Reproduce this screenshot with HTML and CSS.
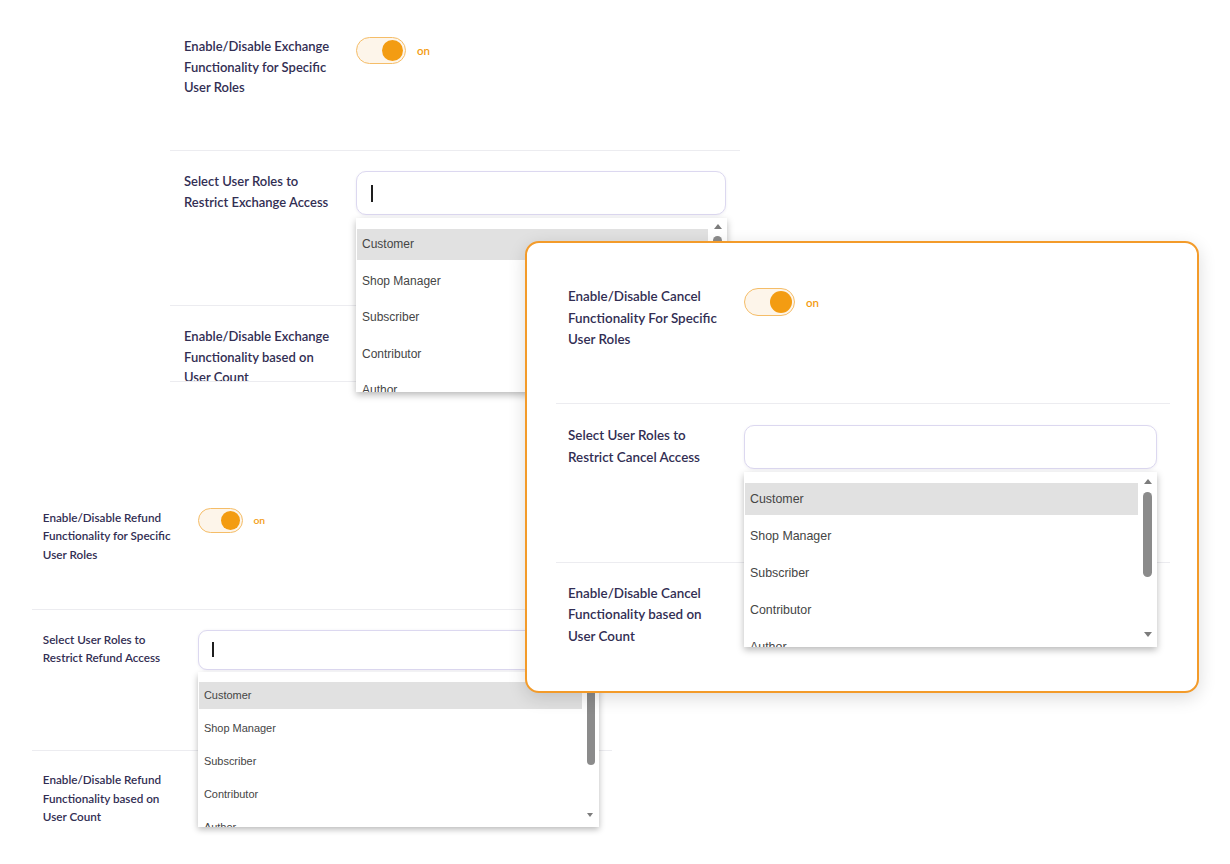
FILE: index.html
```html
<!DOCTYPE html>
<html lang="en">
<head>
<meta charset="utf-8">
<title>User role restrictions</title>
<link rel="stylesheet" href="styles.css">
</head>
<body>
<div class="canvas">

  <section class="panel panel-exchange">
    <div class="panel-body">
      <div class="row row-first">
        <div class="label">Enable/Disable Exchange Functionality for Specific User Roles</div>
        <div class="control">
          <span class="switch"><span class="knob"></span></span>
          <span class="state">on</span>
        </div>
      </div>
      <div class="row row-second">
        <div class="label">Select User Roles to Restrict Exchange Access</div>
        <div class="control">
          <div class="combo">
            <div class="input"><span class="caret"></span></div>
            <div class="dropdown">
              <ul class="options">
                <li class="active">Customer</li>
                <li>Shop Manager</li>
                <li>Subscriber</li>
                <li>Contributor</li>
                <li>Author</li>
              </ul>
              <div class="scrollbar"><span class="arrow up"></span><span class="thumb"></span><span class="arrow down"></span></div>
            </div>
          </div>
        </div>
      </div>
      <div class="row row-third">
        <div class="label">Enable/Disable Exchange Functionality based on User Count</div>
      </div>
    </div>
  </section>

  <section class="panel panel-refund">
    <div class="panel-body">
      <div class="row row-first">
        <div class="label">Enable/Disable Refund Functionality for Specific User Roles</div>
        <div class="control">
          <span class="switch"><span class="knob"></span></span>
          <span class="state">on</span>
        </div>
      </div>
      <div class="row row-second">
        <div class="label">Select User Roles to Restrict Refund Access</div>
        <div class="control">
          <div class="combo">
            <div class="input"><span class="caret"></span></div>
            <div class="dropdown">
              <ul class="options">
                <li class="active">Customer</li>
                <li>Shop Manager</li>
                <li>Subscriber</li>
                <li>Contributor</li>
                <li>Author</li>
              </ul>
              <div class="scrollbar"><span class="arrow up"></span><span class="thumb"></span><span class="arrow down"></span></div>
            </div>
          </div>
        </div>
      </div>
      <div class="row row-third">
        <div class="label">Enable/Disable Refund Functionality based on User Count</div>
      </div>
    </div>
  </section>

  <section class="panel panel-cancel">
    <div class="panel-body">
      <div class="row row-first">
        <div class="label">Enable/Disable Cancel Functionality For Specific User Roles</div>
        <div class="control">
          <span class="switch"><span class="knob"></span></span>
          <span class="state">on</span>
        </div>
      </div>
      <div class="row row-second">
        <div class="label">Select User Roles to Restrict Cancel Access</div>
        <div class="control">
          <div class="combo">
            <div class="input"></div>
            <div class="dropdown">
              <ul class="options">
                <li class="active">Customer</li>
                <li>Shop Manager</li>
                <li>Subscriber</li>
                <li>Contributor</li>
                <li>Author</li>
              </ul>
              <div class="scrollbar"><span class="arrow up"></span><span class="thumb"></span><span class="arrow down"></span></div>
            </div>
          </div>
        </div>
      </div>
      <div class="row row-third">
        <div class="label">Enable/Disable Cancel Functionality based on User Count</div>
      </div>
    </div>
  </section>

</div>
</body>
</html>
```

FILE: styles.css
```css
html, body {
  margin: 0;
  padding: 0;
  background: #ffffff;
}

.canvas {
  position: relative;
  width: 1230px;
  height: 864px;
  overflow: hidden;
  background: #ffffff;
}

/* ---------- panels placed on the canvas ---------- */
.panel {
  position: absolute;
  background: #ffffff;
  font-family: Lato, "Open Sans", "DejaVu Sans", sans-serif;
  color: #312d52;

  --label-pad: 14px;
  --label-col: 172px;
  --label-w: 155px;
  --fs: 13px;
  --lh: 20.5px;
  --row1-h: 151px;
  --row1-pad: 36px;
  --row2-h: 155px;
  --row2-pad: 20px;
  --row3-h: 76px;
  --row3-pad: 20px;
  --sw-w: 50px;
  --sw-h: 27px;
  --sw-mt: 1px;
  --knob: 21px;
  --in-w: 370px;
  --in-h: 44px;
  --dd-gap: 3px;
  --dd-w: 371px;
  --dd-h: 174px;
  --dd-pad: 11px;
  --item-h: 31px;
  --item-gap: 5.5px;
  --item-fs: 12px;
  --thumb-top: 18px;
  --thumb-h: 85px;
  --arrow-up: 6px;
  --arrow-down: 158px;
}

.panel-exchange {
  left: 170px;
  top: 0;
  width: 570px;
  z-index: 1;
}

.panel-refund {
  left: 32px;
  top: 474px;
  z-index: 2;
}

.panel-refund .panel-body {
  zoom: 0.9;
  width: 644px;
  --label-pad: 12px;
  --label-col: 173px;
  --row1-h: 151px;
  --row1-pad: 37.5px;
  --row2-h: 157px;
  --row2-pad: 22px;
  --row3-h: 120px;
  --row3-pad: 21px;
  --sw-h: 28px;
  --sw-mt: 0px;
  --in-w: 445px;
  --in-h: 44.5px;
  --dd-w: 445.5px;
  --dd-h: 172px;
  --item-h: 30px;
  --item-gap: 6.7px;
  --item-fs: 12.2px;
  --arrow-down: 156px;
}

.panel-refund .row-third {
  border-bottom: none;
}

.panel-cancel {
  left: 525px;
  top: 241px;
  width: 674px;
  height: 452px;
  box-sizing: border-box;
  border: 2.5px solid #f39b2a;
  border-radius: 14px;
  padding: 0 27px 0 29px;
  box-shadow: 0 5px 18px rgba(0, 0, 0, 0.14);
  z-index: 3;

  --label-pad: 12px;
  --label-col: 176px;
  --label-w: 160px;
  --fs: 13.4px;
  --lh: 21.5px;
  --row1-h: 161px;
  --row1-pad: 43px;
  --row2-h: 159px;
  --row2-pad: 21px;
  --row3-h: 120px;
  --row3-pad: 19.5px;
  --sw-w: 51px;
  --sw-h: 28px;
  --sw-mt: 2px;
  --knob: 22px;
  --in-w: 413px;
  --in-h: 44px;
  --dd-w: 413px;
  --dd-h: 175px;
  --item-h: 32px;
  --item-gap: 5px;
  --item-fs: 12.4px;
  --thumb-top: 20px;
  --thumb-h: 85px;
  --arrow-up: 7px;
  --arrow-down: 160px;
}

.panel-cancel .row-third {
  border-bottom: none;
}

/* ---------- rows ---------- */
.row {
  display: grid;
  grid-template-columns: var(--label-col) auto;
  align-items: start;
  box-sizing: border-box;
  padding-left: var(--label-pad);
  border-bottom: 1px solid #ececf0;
}

.row-first {
  height: var(--row1-h);
  padding-top: var(--row1-pad);
}

.row-second {
  height: var(--row2-h);
  padding-top: var(--row2-pad);
}

.row-third {
  height: var(--row3-h);
  padding-top: var(--row3-pad);
  overflow: hidden;
}

.label {
  max-width: var(--label-w);
  font-size: var(--fs);
  line-height: var(--lh);
  font-weight: 600;
  color: #322e53;
}

.control {
  display: flex;
  align-items: center;
  gap: 11px;
}

/* ---------- switch ---------- */
.switch {
  position: relative;
  display: flex;
  align-items: center;
  justify-content: flex-end;
  box-sizing: border-box;
  width: var(--sw-w);
  height: var(--sw-h);
  margin-top: var(--sw-mt);
  padding-right: 2.5px;
  border: 1.5px solid #f5bd68;
  border-radius: 16px;
  background: #fdf5ea;
}

.knob {
  width: var(--knob);
  height: var(--knob);
  border-radius: 50%;
  background: #f39c12;
}

.state {
  margin-top: var(--sw-mt);
  font-size: 11.5px;
  font-weight: 600;
  color: #f39c12;
}

/* ---------- combo box ---------- */
.combo {
  position: relative;
  width: var(--in-w);
}

.input {
  display: flex;
  align-items: center;
  box-sizing: border-box;
  width: var(--in-w);
  height: var(--in-h);
  padding-left: 14px;
  border: 1.5px solid #dcd8f0;
  border-radius: 10px;
  background: #ffffff;
  box-shadow: 0 1px 3px rgba(60, 50, 120, 0.08);
}

.caret {
  width: 1.6px;
  height: 17px;
  background: #1e1e1e;
}

/* the opened list lies over the following rows */
.dropdown {
  position: absolute;
  left: 0;
  top: calc(var(--in-h) + var(--dd-gap));
  width: var(--dd-w);
  height: var(--dd-h);
  overflow: hidden;
  background: #ffffff;
  box-shadow: 0 3px 7px rgba(0, 0, 0, 0.28);
  font-family: "Liberation Sans", Arial, sans-serif;
  z-index: 5;
}

.options {
  list-style: none;
  margin: 0 19px 0 1px;
  padding: var(--dd-pad) 0 0;
}

.options li {
  height: var(--item-h);
  line-height: var(--item-h);
  margin-bottom: var(--item-gap);
  padding-left: 5px;
  font-size: var(--item-fs);
  color: #454545;
  white-space: nowrap;
}

.options li.active {
  background: #e1e1e1;
}

.scrollbar {
  position: absolute;
  top: 0;
  right: 0;
  bottom: 0;
  width: 19px;
}

.thumb {
  position: absolute;
  left: 5px;
  top: var(--thumb-top);
  width: 9px;
  height: var(--thumb-h);
  border-radius: 5px;
  background: #8b8b8b;
}

.arrow {
  position: absolute;
  left: 5.5px;
  width: 0;
  height: 0;
  border-left: 4px solid transparent;
  border-right: 4px solid transparent;
}

.arrow.up {
  top: var(--arrow-up);
  border-bottom: 5px solid #7c7c7c;
}

.arrow.down {
  top: var(--arrow-down);
  border-top: 5px solid #7c7c7c;
}
```
